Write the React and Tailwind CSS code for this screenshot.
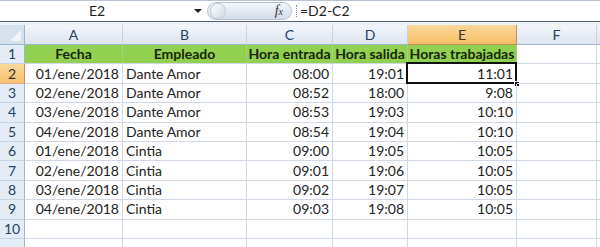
import React from "react";

const cols = [
  { k: "A", w: "w-[98px]" },
  { k: "B", w: "w-[124px]" },
  { k: "C", w: "w-[86px]" },
  { k: "D", w: "w-[75px]" },
  { k: "E", w: "w-[109px]" },
  { k: "F", w: "w-[80px]" },
  { k: "", w: "w-[20px]" },
];

const data = [
  ["01/ene/2018", "Dante Amor", "08:00", "19:01", "11:01"],
  ["02/ene/2018", "Dante Amor", "08:52", "18:00", "9:08"],
  ["03/ene/2018", "Dante Amor", "08:53", "19:03", "10:10"],
  ["04/ene/2018", "Dante Amor", "08:54", "19:04", "10:10"],
  ["01/ene/2018", "Cintia", "09:00", "19:05", "10:05"],
  ["02/ene/2018", "Cintia", "09:01", "19:06", "10:05"],
  ["03/ene/2018", "Cintia", "09:02", "19:07", "10:05"],
  ["04/ene/2018", "Cintia", "09:03", "19:08", "10:05"],
];

const headers = ["Fecha", "Empleado", "Hora entrada", "Hora salida", "Horas trabajadas"];

function RowHead({ n, active }) {
  return (
    <div
      className={
        "w-[25px] shrink-0 h-full flex items-center justify-center border-r border-b text-[14px] " +
        (active
          ? "bg-gradient-to-b from-[#fbd89a] to-[#f7c170] border-r-[#c2925a] border-b-[#d9b07a] text-[#333]"
          : "bg-[#e4ecf7] border-r-[#9eb6ce] border-b-[#c5d3e2] text-[#27415f]")
      }
    >
      {n}
    </div>
  );
}

export default function App() {
  return (
    <div
      className="w-[600px] h-[247px] overflow-hidden bg-white text-[14px] leading-none text-[#222] whitespace-nowrap"
      style={{ fontFamily: 'Lato, "Open Sans", sans-serif' }}
    >
      {/* Formula bar */}
      <div className="h-[22px] flex items-stretch border-t border-t-[#b8c4d2] border-b border-b-[#55606e] bg-white">
        <div className="w-[207px] shrink-0 flex items-center relative">
          <span className="w-[194px] text-center text-[14px] text-[#222]">E2</span>
          <span className="absolute left-[194px] top-[8px] w-0 h-0 border-l-[4px] border-r-[4px] border-t-[4px] border-l-transparent border-r-transparent border-t-[#222]" />
        </div>
        <div className="w-[85px] shrink-0 my-[1px] rounded-full border border-[#b6c2d2] bg-gradient-to-b from-[#f5f8fc] via-[#e3eaf3] to-[#d3dce8] flex items-center justify-between pl-[2px] pr-[8px]">
          <span className="w-[16px] h-[16px] rounded-full bg-gradient-to-br from-[#ffffff] to-[#d3dbe6] border border-[#c0cad7]" />
          <span className="italic text-[14px] text-[#333]" style={{ fontFamily: '"Liberation Serif", serif' }}>
            f<span className="text-[10px]">x</span>
          </span>
        </div>
        <div className="w-[8px] shrink-0 flex items-center justify-center">
          <span className="w-[1px] h-[12px] border-l border-dotted border-[#889]" />
        </div>
        <div className="flex-1 flex items-center text-[14px] text-[#222]">=D2-C2</div>
      </div>
      <div className="h-[3px] bg-[#eef1f5]" />

      {/* Column headers */}
      <div className="h-[20px] flex">
        <div className="w-[25px] shrink-0 h-full relative border-r border-b border-r-[#9eb6ce] border-b-[#9eb6ce] bg-[#d6e1ee] overflow-hidden">
          <svg className="absolute right-[3px] bottom-[3px]" width="11" height="11" viewBox="0 0 11 11">
            <polygon points="11,0 11,11 0,11" fill="#f2f5f9" />
          </svg>
        </div>
        {cols.map((c, i) => (
          <div
            key={i}
            className={
              c.w +
              " shrink-0 h-full flex items-center justify-center border-r border-b text-[14px] " +
              (c.k === "E"
                ? "bg-gradient-to-b from-[#fbd89a] to-[#f6be63] border-r-[#c2925a] border-b-[#c2925a] text-[#333]"
                : "bg-gradient-to-b from-[#f3f6fb] to-[#dde5f0] border-r-[#c5d3e2] border-b-[#9eb6ce] text-[#27415f]")
            }
          >
            {c.k}
          </div>
        ))}
      </div>

      {/* Row 1 */}
      <div className="h-[19.4px] flex">
        <RowHead n={1} />
        {cols.map((c, i) => (
          <div
            key={i}
            className={
              c.w +
              " shrink-0 h-full flex items-center justify-center border-r border-b font-bold text-[14px] text-[#17260c] " +
              (i < 5 ? "bg-[#92d050] border-r-[#a9cf86] border-b-[#d0d7e5]" : "bg-white border-r-[#d0d7e5] border-b-[#d0d7e5]")
            }
          >
            {headers[i] || ""}
          </div>
        ))}
      </div>

      {data.map((r, ri) => (
        <div key={ri} className="h-[19.4px] flex">
          <RowHead n={ri + 2} active={ri === 0} />
          {cols.map((c, i) => {
            const v = r[i] || "";
            const align = i === 1 ? "justify-start pl-[3px]" : "justify-end pr-[3px]";
            const active = ri === 0 && i === 4;
            return (
              <div
                key={i}
                className={
                  c.w +
                  " shrink-0 h-full flex items-center border-r border-b border-r-[#d0d7e5] border-b-[#d0d7e5] relative " +
                  align
                }
              >
                {v}
                {active && (
                  <>
                    <span className="absolute left-[-2px] top-[-2px] right-[-1px] bottom-[-1px] border-2 border-[#111]" />
                    <span className="absolute right-[-4px] bottom-[-4px] w-[6px] h-[6px] bg-[#111] border border-white" />
                  </>
                )}
              </div>
            );
          })}
        </div>
      ))}

      {["10", ""].map((n, k) => (
        <div key={k} className="h-[19.4px] flex">
          <RowHead n={n} />
          {cols.map((c, i) => (
            <div key={i} className={c.w + " shrink-0 h-full border-r border-b border-r-[#d0d7e5] border-b-[#d0d7e5]"} />
          ))}
        </div>
      ))}
    </div>
  );
}
